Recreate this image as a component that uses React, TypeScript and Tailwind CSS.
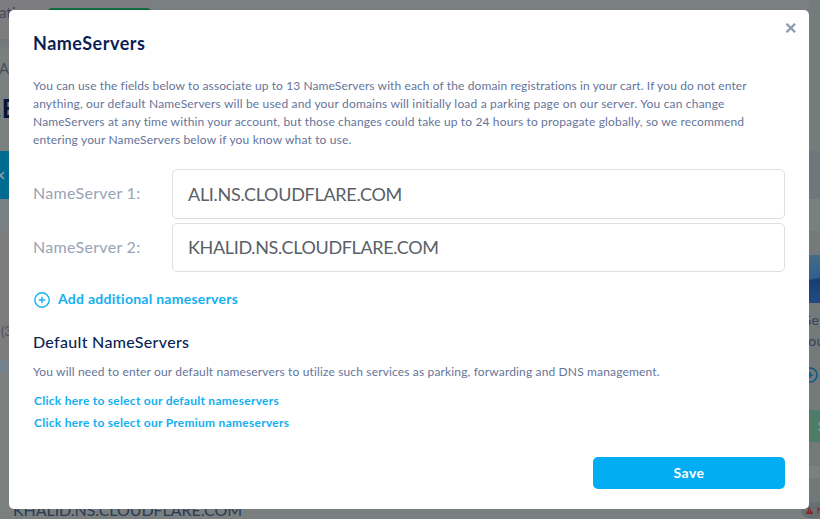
import type { ReactNode } from "react";

function Backdrop() {
  return (
    <div aria-hidden="true" className="absolute inset-0 overflow-hidden bg-[#7a8080] text-[#2b3a55]">
      <div className="absolute inset-0 flex justify-between">
        <div className="flex w-[9px] flex-col overflow-hidden whitespace-nowrap">
          <div className="h-[39px] bg-[#7d7d7f]" />
          <div className="h-28 bg-[linear-gradient(#70777a,#7a8080_12px)]" />
          <div className="flex h-12 items-center bg-[#006b91]">
            <svg className="-ml-1 size-[9px]" viewBox="0 0 9 9" fill="none" stroke="#8a9ba5" strokeWidth="1.6">
              <path d="m1 1 7 7M8 1 1 8" />
            </svg>
          </div>
          <div className="h-8 bg-[#788084]" />
          <div className="h-[130px] bg-[#7d7d7d] pt-[92px] text-[13px] leading-4 text-[#4c5157]">
            <span className="ml-px">(3</span>
          </div>
          <div className="h-3 bg-[#73828c]" />
          <div className="flex-1 bg-[#7b7f7f]" />
        </div>
        <div className="flex w-[11px] flex-col overflow-hidden whitespace-nowrap">
          <div className="h-[151px] bg-[#757c7d]" />
          <div className="h-12 bg-[#70777a]" />
          <div className="h-8 bg-[#788081]" />
          <div className="h-6 bg-[#74797b]" />
          <div className="h-12 bg-[linear-gradient(170deg,#456c85,#315f8f_48%,#183d75_52%,#224d83)]" />
          <div className="h-[107px] bg-[#74797b] pt-1.5 text-sm leading-[21px] tracking-[0.3px] text-[#35435b]">
            <p className="-ml-2">Get</p>
            <p className="-ml-2">your</p>
            <svg className="-ml-[7px] mt-4 size-4" viewBox="0 0 16 16" fill="none" stroke="#075d83" strokeWidth="1.6">
              <circle cx="8" cy="8" r="7" />
              <path d="M8 5v6M5 8h6" />
            </svg>
          </div>
          <div className="h-8 bg-[#4d7d66] pl-[9px] text-sm font-bold leading-8 text-[#92a59a]">S</div>
          <div className="h-6 bg-[#74797b]" />
          <div className="h-3 bg-[#7b8081]" />
          <div className="flex-1 bg-[#73797b]" />
        </div>
      </div>
      <div className="absolute left-0 top-0 flex h-[39px] w-[151px] bg-[#7d7d7f] text-[15px] leading-[25px] text-[#42495b]">
        <span className="-ml-px w-[49px]">ati</span>
        <span className="mt-2 w-[103px] rounded-t bg-[#126b3c]" />
      </div>
      <span className="absolute -left-px top-[58px] text-[15px] leading-5 text-[#46505c]">A</span>
      <span className="absolute -left-[5px] top-[92px] text-[27px] font-bold leading-8 text-[#061536]">.E</span>
      <span className="absolute left-[13px] top-[500px] text-base leading-5 tracking-[-0.05px]">KHALID.NS.CLOUDFLARE.COM</span>
      <div className="absolute left-[801px] top-[502px] flex h-4 w-8 items-center rounded-lg bg-[#686f72] pl-[5px] text-[7px] font-bold text-[#861d25]">
        <svg className="mr-1 size-[7px] shrink-0" viewBox="0 0 8 8">
          <path d="M4 0 8 8H0Z" fill="#861d25" />
          <path d="M4 3v2.2M4 6v1" stroke="#8b9292" strokeWidth=".8" />
        </svg>
        N
      </div>
    </div>
  );
}

function ServerField({ label, value, fieldClass }: { label: string; value: string; fieldClass: string }) {
  return (
    <div className="flex items-center">
      <label className="w-[139px] pb-0.5 text-base tracking-[0.3px] text-[#98a3b8]">{label}</label>
      <div className={`flex flex-1 items-center rounded-[5px] border border-[#dedfe1] pl-[15px] pb-px text-lg text-[#596067] ${fieldClass}`}>
        {value}
      </div>
    </div>
  );
}

function Line({ children, className }: { children: ReactNode; className: string }) {
  return <span className={`block whitespace-nowrap ${className}`}>{children}</span>;
}

export default function App() {
  return (
    <main className="relative h-[519px] w-[820px] overflow-hidden pl-[9px] pt-[10px] font-['Lato',sans-serif]">
      <Backdrop />
      <section className="relative h-[499px] w-[800px] rounded-[5px] bg-white px-6">
        <header className="flex justify-between pt-[21px]">
          <h1 className="text-lg font-bold leading-6 tracking-[0.5px] text-[#0a1f53]">NameServers</h1>
          <button aria-label="Close" className="-mr-3 -mt-[9px] flex size-3 items-start justify-start">
            <svg className="size-3" viewBox="0 0 12 12" fill="none" stroke="#8c99ae" strokeWidth="2.3">
              <path d="m1.5 1.7 8.6 8.6M10.1 1.7 1.5 10.3" />
            </svg>
          </button>
        </header>
        <p className="mt-[22px] text-xs leading-[18px] text-[#65749a]">
          <Line className="tracking-[0.105px]">You can use the fields below to associate up to 13 NameServers with each of the domain registrations in your cart. If you do not enter</Line>
          <Line className="tracking-[0.18px]">anything, our default NameServers will be used and your domains will initially load a parking page on our server. You can change</Line>
          <Line className="tracking-[0.147px]">NameServers at any time within your account, but those changes could take up to 24 hours to propagate globally, so we recommend</Line>
          <Line className="tracking-[0.16px]">entering your NameServers below if you know what to use.</Line>
        </p>
        <div className="mt-5 flex flex-col gap-1">
          <ServerField label="NameServer 1:" value="ALI.NS.CLOUDFLARE.COM" fieldClass="h-[50px] tracking-[-0.29px]" />
          <ServerField label="NameServer 2:" value="KHALID.NS.CLOUDFLARE.COM" fieldClass="h-[49px] tracking-[-0.35px]" />
        </div>
        <button className="mt-[18px] flex h-5 items-center gap-2 text-sm font-bold tracking-[0.27px] text-[#13aff0]">
          <svg className="ml-px size-4" viewBox="0 0 16 16" fill="none" stroke="currentColor" strokeWidth="1.4">
            <circle cx="8" cy="8" r="7.2" />
            <path d="M8 4.8v6.4M4.8 8h6.4" />
          </svg>
          <span className="pb-0.5">Add additional nameservers</span>
        </button>
        <h2 className="mt-5 text-base font-medium leading-6 tracking-[0.31px] text-[#0a1f53]">Default NameServers</h2>
        <p className="mt-[9px] text-xs leading-[18px] tracking-[0.15px] text-[#65749a]">You will need to enter our default nameservers to utilize such services as parking, forwarding and DNS management.</p>
        <div className="ml-px mt-[9px] text-xs font-bold leading-[22px] tracking-[0.26px] text-[#13aff0]">
          <Line className="">Click here to select our default nameservers</Line>
          <Line className="">Click here to select our Premium nameservers</Line>
        </div>
        <button className="ml-auto mt-[23px] block h-8 w-48 rounded-[5px] bg-[#02adf3] pb-px text-sm font-bold leading-[31px] tracking-[0.4px] text-white">Save</button>
      </section>
    </main>
  );
}
